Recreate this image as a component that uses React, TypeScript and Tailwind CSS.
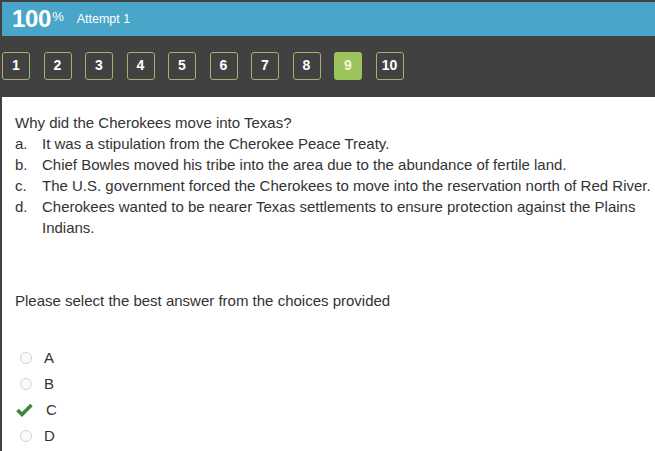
import React from "react";

const nums = ["1", "2", "3", "4", "5", "6", "7", "8", "9", "10"];
const options = [
  ["a.", "It was a stipulation from the Cherokee Peace Treaty."],
  ["b.", "Chief Bowles moved his tribe into the area due to the abundance of fertile land."],
  ["c.", "The U.S. government forced the Cherokees to move into the reservation north of Red River."],
  ["d.", "Cherokees wanted to be nearer Texas settlements to ensure protection against the Plains Indians."],
];

export default function App() {
  return (
    <div className="w-[655px] h-[451px] overflow-hidden bg-white" style={{ fontFamily: '"Liberation Sans", Arial, sans-serif' }}>
      <div className="bg-[#414141] pt-[2px] pl-[2px]">
        <div className="h-[34px] bg-[#49a6c9] flex items-center pl-[10px] text-white">
          <span className="text-[24px] font-bold leading-none tracking-[-0.3px]">100</span>
          <span className="text-[13px] self-start mt-[5px] ml-[1px]">%</span>
          <span className="text-[12.5px] ml-[13px] mt-[1px]">Attempt 1</span>
        </div>
        <div className="h-[61px] flex items-center gap-[13.5px] pb-[2px]">
          {nums.map((n) => (
            <div
              key={n}
              className={
                "w-[28px] h-[28px] rounded-[3px] flex items-center justify-center text-[14px] font-bold " +
                (n === "9"
                  ? "bg-[#9dc35c] text-[#f3f6d8]"
                  : "border border-[#a4b26e] text-white")
              }
            >
              {n}
            </div>
          ))}
        </div>
      </div>
      <div className="border-l-[2px] border-[#414141] h-full pl-[13px] text-[#333] text-[15px] leading-[21px] pt-[15px]">
        <div>Why did the Cherokees move into Texas?</div>
        {options.map(([l, t]) => (
          <div key={l} className="flex">
            <span className="w-[27px] shrink-0">{l}</span>
            <span>{t}</span>
          </div>
        ))}
        <div className="mt-[52px]">Please select the best answer from the choices provided</div>
        <div className="mt-[36px] flex flex-col gap-[5px]">
          {["A", "B", "C", "D"].map((L) => (
            <div key={L} className="flex items-center h-[21px]">
              {L === "C" ? (
                <svg width="17" height="14" viewBox="0 0 17 14" className="ml-[1px] mr-[13px]">
                  <path d="M1.5 7 L6 11.5 L15.5 2" stroke="#3c8a3a" strokeWidth="3.6" fill="none" />
                </svg>
              ) : (
                <span className="ml-[5px] mr-[12px] w-[12px] h-[12px] rounded-full border border-[#d4d4d4] bg-[#fafafa]" />
              )}
              <span>{L}</span>
            </div>
          ))}
        </div>
      </div>
    </div>
  );
}
